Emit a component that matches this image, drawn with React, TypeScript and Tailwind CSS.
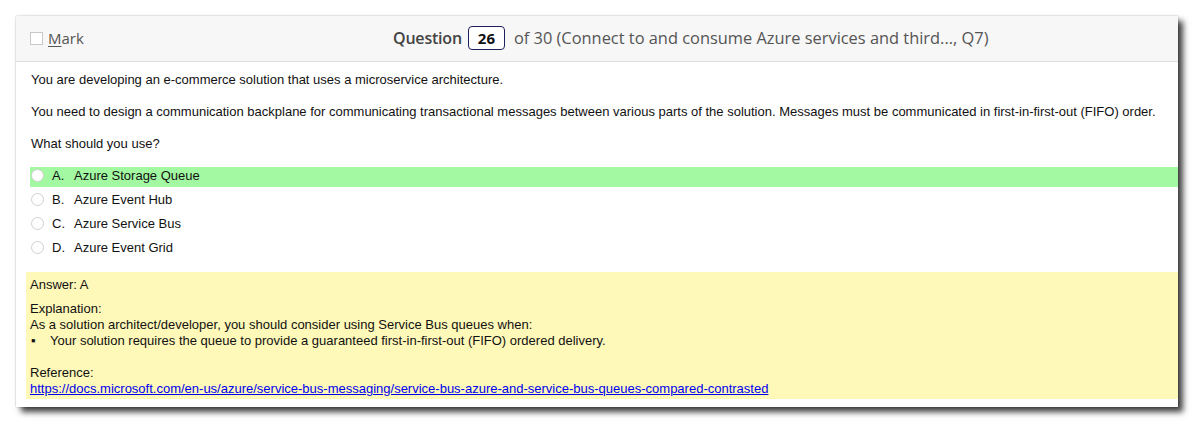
import { useState } from 'react'

const options = [
  { key: 'A', text: 'Azure Storage Queue' },
  { key: 'B', text: 'Azure Event Hub' },
  { key: 'C', text: 'Azure Service Bus' },
  { key: 'D', text: 'Azure Event Grid' },
]

const link =
  'https://docs.microsoft.com/en-us/azure/service-bus-messaging/service-bus-azure-and-service-bus-queues-compared-contrasted'

export default function App() {
  const [marked, setMarked] = useState(false)
  const correct = 'A'

  return (
    <div className="w-[1195px] h-[424px] bg-white pt-4 pl-4">
      <div className="w-[1162px] h-[391px] bg-white shadow-[5px_5px_6px_rgba(0,0,0,0.75),0_0_2px_rgba(0,0,0,0.25)] flex flex-col">
        {/* Header */}
        <div className="h-[46px] shrink-0 flex items-center bg-[#f7f7f7] border-b border-[#dcdcdc] font-['Open_Sans',sans-serif] text-[#555]">
          <label className="flex items-center pl-[14px] w-[377px] cursor-pointer">
            <span
              onClick={() => setMarked(!marked)}
              className="w-[13px] h-[13px] border border-[#c8c8c8] bg-white flex items-center justify-center text-[10px] leading-none"
            >
              {marked ? '✓' : ''}
            </span>
            <span className="ml-[5px] text-[15px]">
              <span className="underline underline-offset-2">M</span>ark
            </span>
          </label>
          <div className="flex items-center text-[16px] text-[#555]">
            <span className="font-semibold text-[#444] tracking-[-0.2px]">Question</span>
            <span className="ml-[6px] w-[37px] h-[24px] flex items-center justify-center border border-[#1f1f5c] rounded-[4px] bg-white font-bold text-[15px] text-[#111]">
              26
            </span>
            <span className="ml-[9px] text-[16.4px]">of 30 (Connect to and consume Azure services and third..., Q7)</span>
          </div>
        </div>

        {/* Body */}
        <div className="font-['Liberation_Sans',Arial,sans-serif] text-[13px] leading-4 text-[#111]">
          <div className="pl-[15px] pt-[10px]">
            <p className="mb-4">You are developing an e-commerce solution that uses a microservice architecture.</p>
            <p className="mb-4">
              You need to design a communication backplane for communicating transactional messages between various
              parts of the solution. Messages must be communicated in first-in-first-out (FIFO) order.
            </p>
            <p>What should you use?</p>
          </div>

          <div className="mt-[15px] ml-[14px] flex flex-col gap-1">
            {options.map((o) => (
              <div
                key={o.key}
                className={`h-5 flex items-center pl-[1px] pb-[3px] ${o.key === correct ? 'bg-[#a2f9a2]' : ''}`}
              >
                <span className="w-[13px] h-[13px] rounded-full border border-[#cfcfcf] bg-white" />
                <span className="ml-[8px] w-[22px]">{o.key}.</span>
                <span>{o.text}</span>
              </div>
            ))}
          </div>

          <div className="mt-[13px] ml-[10px] bg-[#fef8b9] pl-[4px] pt-[5px] pb-[2px]">
            <p>Answer: A</p>
            <p className="mt-2">Explanation:</p>
            <p>As a solution architect/developer, you should consider using Service Bus queues when:</p>
            <div className="flex pl-[1px]">
              <span className="w-[19px]">▪</span>
              <span>Your solution requires the queue to provide a guaranteed first-in-first-out (FIFO) ordered delivery.</span>
            </div>
            <p className="h-4" />
            <p>Reference:</p>
            <a href={link} className="text-[#0000ee] underline">
              {link}
            </a>
          </div>
        </div>
      </div>
    </div>
  )
}
